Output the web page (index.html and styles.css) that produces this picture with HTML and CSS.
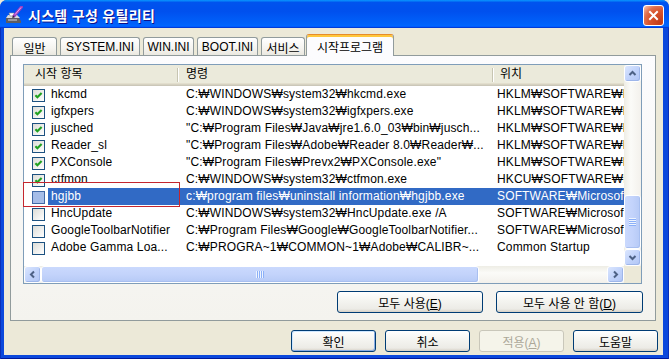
FILE: index.html
```html
<!DOCTYPE html>
<html lang="ko">
<head>
<meta charset="utf-8">
<title>시스템 구성 유틸리티</title>
<link rel="stylesheet" href="styles.css">
</head>
<body>
<div class="window">
  <div class="titlebar">
    <svg class="app-icon" viewBox="0 0 18 18" width="18" height="18">
      <polygon points="1,12 14,12 16,15 16,17 1,17" fill="#5d5d62"/>
      <polygon points="3,9 12,9 15,12 1,12" fill="#d9d9de"/>
      <rect x="3" y="13" width="9" height="2" fill="#9a9aa2"/>
      <polygon points="4,7 9,7 10,10 5,10" fill="#ffffff" stroke="#8a8a90" stroke-width="0.6"/>
      <line x1="16.5" y1="1" x2="9" y2="10" stroke="#9b3fc0" stroke-width="3" stroke-linecap="round"/>
      <line x1="16" y1="1.5" x2="10" y2="8.6" stroke="#e7a8f5" stroke-width="1"/>
      <polygon points="8,9.5 9.8,11 7.2,12.2" fill="#2a2a2a"/>
    </svg>
    <span class="title">시스템 구성 유틸리티</span>
    <div class="close">
      <svg viewBox="0 0 13 13" width="13" height="13"><path d="M3 3 L10 10 M10 3 L3 10" stroke="#fff" stroke-width="2" stroke-linecap="square" fill="none"/></svg>
    </div>
  </div>
  <div class="frame">
    <div class="client">
      <div class="tabs">
        <div class="tab w-general">일반</div>
        <div class="tab w-system">SYSTEM.INI</div>
        <div class="tab w-win">WIN.INI</div>
        <div class="tab w-boot">BOOT.INI</div>
        <div class="tab w-service">서비스</div>
        <div class="tab tab-active w-startup">시작프로그램</div>
      </div>
      <div class="panel">
        <div class="listview">
          <div class="lv-body">
            <div class="lv-header">
              <div class="hcell h1">시작 항목</div>
              <div class="hcell h2">명령</div>
              <div class="hcell h3">위치</div>
            </div>
            <div class="lv-row">
              <div class="c-check"><span class="chk"><svg viewBox="0 0 11 11" width="11" height="11"><path d="M2.4 5.2 L4.4 7.3 L8.6 2.9" stroke="#21a121" stroke-width="2.1" fill="none"/></svg></span></div>
              <div class="cell c-name">hkcmd</div>
              <div class="cell c-cmd">C:₩WINDOWS₩system32₩hkcmd.exe</div>
              <div class="cell c-loc">HKLM₩SOFTWARE₩Micro</div>
            </div>
            <div class="lv-row">
              <div class="c-check"><span class="chk"><svg viewBox="0 0 11 11" width="11" height="11"><path d="M2.4 5.2 L4.4 7.3 L8.6 2.9" stroke="#21a121" stroke-width="2.1" fill="none"/></svg></span></div>
              <div class="cell c-name">igfxpers</div>
              <div class="cell c-cmd">C:₩WINDOWS₩system32₩igfxpers.exe</div>
              <div class="cell c-loc">HKLM₩SOFTWARE₩Micro</div>
            </div>
            <div class="lv-row">
              <div class="c-check"><span class="chk"><svg viewBox="0 0 11 11" width="11" height="11"><path d="M2.4 5.2 L4.4 7.3 L8.6 2.9" stroke="#21a121" stroke-width="2.1" fill="none"/></svg></span></div>
              <div class="cell c-name">jusched</div>
              <div class="cell c-cmd">"C:₩Program Files₩Java₩jre1.6.0_03₩bin₩jusch...</div>
              <div class="cell c-loc">HKLM₩SOFTWARE₩Micro</div>
            </div>
            <div class="lv-row">
              <div class="c-check"><span class="chk"><svg viewBox="0 0 11 11" width="11" height="11"><path d="M2.4 5.2 L4.4 7.3 L8.6 2.9" stroke="#21a121" stroke-width="2.1" fill="none"/></svg></span></div>
              <div class="cell c-name">Reader_sl</div>
              <div class="cell c-cmd">"C:₩Program Files₩Adobe₩Reader 8.0₩Reader₩...</div>
              <div class="cell c-loc">HKLM₩SOFTWARE₩Micro</div>
            </div>
            <div class="lv-row">
              <div class="c-check"><span class="chk"><svg viewBox="0 0 11 11" width="11" height="11"><path d="M2.4 5.2 L4.4 7.3 L8.6 2.9" stroke="#21a121" stroke-width="2.1" fill="none"/></svg></span></div>
              <div class="cell c-name">PXConsole</div>
              <div class="cell c-cmd">"C:₩Program Files₩Prevx2₩PXConsole.exe"</div>
              <div class="cell c-loc">HKLM₩SOFTWARE₩Micro</div>
            </div>
            <div class="lv-row">
              <div class="c-check"><span class="chk"><svg viewBox="0 0 11 11" width="11" height="11"><path d="M2.4 5.2 L4.4 7.3 L8.6 2.9" stroke="#21a121" stroke-width="2.1" fill="none"/></svg></span></div>
              <div class="cell c-name">ctfmon</div>
              <div class="cell c-cmd">C:₩WINDOWS₩system32₩ctfmon.exe</div>
              <div class="cell c-loc">HKCU₩SOFTWARE₩Micro</div>
            </div>
            <div class="lv-row selected">
              <div class="c-check"><span class="chk chk-sel"></span></div>
              <div class="cell c-name">hgjbb</div>
              <div class="cell c-cmd">c:₩program files₩uninstall information₩hgjbb.exe</div>
              <div class="cell c-loc">SOFTWARE₩Microsoft</div>
            </div>
            <div class="lv-row">
              <div class="c-check"><span class="chk"></span></div>
              <div class="cell c-name">HncUpdate</div>
              <div class="cell c-cmd">C:₩WINDOWS₩system32₩HncUpdate.exe /A</div>
              <div class="cell c-loc">SOFTWARE₩Microsoft</div>
            </div>
            <div class="lv-row">
              <div class="c-check"><span class="chk"></span></div>
              <div class="cell c-name">GoogleToolbarNotifier</div>
              <div class="cell c-cmd">C:₩Program Files₩Google₩GoogleToolbarNotifier...</div>
              <div class="cell c-loc">SOFTWARE₩Microsoft</div>
            </div>
            <div class="lv-row">
              <div class="c-check"><span class="chk"></span></div>
              <div class="cell c-name">Adobe Gamma Loa...</div>
              <div class="cell c-cmd">C:₩PROGRA~1₩COMMON~1₩Adobe₩CALIBR~...</div>
              <div class="cell c-loc">Common Startup</div>
            </div>
          </div>
          <div class="vscroll">
            <div class="sb-btn"><svg viewBox="0 0 9 9" width="9" height="9"><path d="M1.5 6 L4.5 3 L7.5 6" stroke="#4d6185" stroke-width="2" fill="none"/></svg></div>
            <div class="track"></div>
            <div class="vthumb"><span class="vgrip"></span></div>
            <div class="sb-btn"><svg viewBox="0 0 9 9" width="9" height="9"><path d="M1.5 3 L4.5 6 L7.5 3" stroke="#4d6185" stroke-width="2" fill="none"/></svg></div>
          </div>
          <div class="hscroll">
            <div class="sb-btn"><svg viewBox="0 0 9 9" width="9" height="9"><path d="M6 1.5 L3 4.5 L6 7.5" stroke="#4d6185" stroke-width="2" fill="none"/></svg></div>
            <div class="hthumb"><span class="hgrip"></span></div>
            <div class="track"></div>
            <div class="sb-btn"><svg viewBox="0 0 9 9" width="9" height="9"><path d="M3 1.5 L6 4.5 L3 7.5" stroke="#4d6185" stroke-width="2" fill="none"/></svg></div>
          </div>
          <div class="corner"></div>
          <div class="mark-box"></div>
        </div>
        <div class="panel-buttons">
          <button class="btn btn-enable">모두 사용(<u>E</u>)</button>
          <button class="btn btn-disable">모두 사용 안 함(<u>D</u>)</button>
        </div>
      </div>
      <div class="dialog-buttons">
        <button class="btn btn-dlg btn-default">확인</button>
        <button class="btn btn-dlg">취소</button>
        <button class="btn btn-dlg btn-disabled">적용(<u>A</u>)</button>
        <button class="btn btn-dlg">도움말</button>
      </div>
    </div>
  </div>
</div>
</body>
</html>
```

FILE: styles.css
```css
* { box-sizing: border-box; }

html, body {
  margin: 0;
  padding: 0;
  width: 669px;
  height: 359px;
  overflow: hidden;
  background: #ece9d8;
}

body {
  font-family: "Liberation Sans", "Noto Sans CJK KR", sans-serif;
  font-size: 12px;
  color: #000;
}

.window {
  width: 669px;
  height: 359px;
  display: flex;
  flex-direction: column;
  background: #0b46dc;
  border-radius: 7px 7px 0 0;
  overflow: hidden;
}

/* ---------- title bar ---------- */
.titlebar {
  flex: none;
  height: 28px;
  display: flex;
  align-items: center;
  padding: 0 5px;
  background: linear-gradient(#0997ff 0%, #0053ee 9%, #0050ee 40%, #0062fb 86%, #0066ff 92%, #005bff 95%, #003dd7 97%, #003dd7 100%);
}

.app-icon {
  flex: none;
  margin-top: 1px;
}

.title {
  flex: 1;
  margin-left: 5px;
  padding-top: 1px;
  color: #fff;
  font-family: "Noto Sans CJK KR", sans-serif;
  font-weight: bold;
  font-size: 14px;
  letter-spacing: 0.3px;
  text-shadow: 1px 1px #0f1089;
  white-space: nowrap;
}

.close {
  flex: none;
  align-self: flex-start;
  margin-top: 5px;
  width: 21px;
  height: 21px;
  border: 1px solid #fff;
  border-radius: 3px;
  background: radial-gradient(circle at 85% 85%, #c13b18 0%, #d9552e 50%, #e0704e 70%, #f1b09a 92%, #fff 100%);
  display: flex;
  align-items: center;
  justify-content: center;
}

/* ---------- frame / client ---------- */
.frame {
  flex: 1;
  display: flex;
  padding: 0 6px 4px 4px;
  background: #0b48dc;
  box-shadow: inset 1px 0 #0a2fb8, inset -1px 0 #0a2fb8, inset 0 -1px #00189a;
}

.client {
  flex: 1;
  background: #ece9d8;
  display: flex;
  flex-direction: column;
  padding: 6px 0 0 6px;
}

/* ---------- tabs ---------- */
.tabs {
  position: relative;
  z-index: 2;
  height: 21px;
  display: flex;
  align-items: flex-end;
  gap: 3px;
  padding-left: 2px;
}

.tab {
  flex: none;
  height: 18px;
  border: 1px solid #919b9c;
  border-bottom: none;
  border-radius: 3px 3px 0 0;
  background: linear-gradient(#ffffff, #f5f4f0 60%, #eae8e0);
  display: flex;
  align-items: center;
  justify-content: center;
  padding-top: 1px;
  white-space: nowrap;
}

.w-general { width: 45px; }
.w-system { width: 80px; }
.w-win { width: 51px; }
.w-boot { width: 61px; }
.w-service { width: 44px; }
.w-startup { width: 88px; }

.tab-active {
  height: 22px;
  margin-left: -2px;
  margin-bottom: -1px;
  align-items: flex-start;
  padding-top: 3px;
  border-top: 1px solid #e68b2c;
  background: #fcfcfe;
  box-shadow: inset 0 2px #ffc73c;
}

/* ---------- panel ---------- */
.panel {
  width: 646px;
  height: 266px;
  border: 1px solid #919b9c;
  background: linear-gradient(#fcfcfe, #f4f3ee);
  padding: 8px 12px 7px 12px;
  display: flex;
  flex-direction: column;
  gap: 7px;
}

/* ---------- list view ---------- */
.listview {
  position: relative;
  width: 619px;
  height: 220px;
  border: 1px solid #7f9db9;
  background: #fff;
  display: grid;
  grid-template-columns: 600px 17px;
  grid-template-rows: 201px 17px;
}

.lv-body {
  overflow: hidden;
}

.lv-header {
  display: grid;
  grid-template-columns: 153px 315px 132px;
  height: 21px;
  background: linear-gradient(#ebeadb 0, #ebeadb 18px, #e2decd 18px, #e2decd 19px, #d6d2c2 19px, #d6d2c2 20px, #cbc7b8 20px);
}

.hcell {
  line-height: 19px;
  white-space: nowrap;
  overflow: hidden;
}

.h1 { padding-left: 11px; }
.h2 { padding-left: 9px; }
.h3 { padding-left: 8px; }

.h2, .h3 {
  background:
    linear-gradient(#c7c5b2, #c7c5b2) 0 3px / 1px 14px no-repeat,
    linear-gradient(#ffffff, #ffffff) 1px 3px / 1px 14px no-repeat;
}

.lv-row {
  display: grid;
  grid-template-columns: 24px 132px 311px 133px;
  height: 17px;
  line-height: 17px;
  white-space: nowrap;
  letter-spacing: 0.15px;
}

.cell {
  overflow: hidden;
}

.c-check {
  padding: 3px 0 0 8px;
}

.c-name { padding-left: 3px; }
.c-cmd { padding-left: 6px; }
.c-loc { padding-left: 6px; }

.selected .c-name,
.selected .c-cmd,
.selected .c-loc {
  background: #316ac5;
  color: #fff;
}

.chk {
  display: flex;
  align-items: center;
  justify-content: center;
  width: 13px;
  height: 13px;
  border: 1px solid #1c5180;
  background: linear-gradient(135deg, #dcdcd7, #ffffff);
}

.chk-sel {
  border-color: #3f68a6;
  background: #a6bde8;
}

/* ---------- scrollbars ---------- */
.vscroll {
  display: flex;
  flex-direction: column;
  background: linear-gradient(to right, #eeede5, #fbfbf8 40%, #f3f1ec);
}

.hscroll {
  display: flex;
  background: linear-gradient(#eeede5, #fbfbf8 40%, #f3f1ec);
}

.track {
  flex: 1;
}

.sb-btn {
  flex: none;
  width: 17px;
  height: 17px;
  border: 1px solid #fff;
  border-radius: 3px;
  background: linear-gradient(135deg, #dbe6fe, #c1d3fb 50%, #b2c6f5);
  box-shadow: inset -1px -1px #9eb6ea;
  display: flex;
  align-items: center;
  justify-content: center;
}

.vthumb {
  flex: none;
  height: 54px;
  border: 1px solid #fff;
  border-radius: 3px;
  background: linear-gradient(to right, #cad9fd, #c3d3fb 50%, #b6caf6);
  box-shadow: inset -1px -1px #a8bff0;
  display: flex;
  align-items: center;
  justify-content: center;
}

.vgrip {
  width: 7px;
  height: 8px;
  background: repeating-linear-gradient(#eef4fe 0, #eef4fe 1px, #8cb0f8 1px, #8cb0f8 2px);
}

.hthumb {
  flex: none;
  width: 438px;
  height: 17px;
  border: 1px solid #fff;
  border-radius: 3px;
  background: linear-gradient(#cad9fd, #c3d3fb 50%, #b6caf6);
  box-shadow: inset -1px -1px #a8bff0;
  display: flex;
  align-items: center;
  justify-content: center;
}

.hgrip {
  width: 8px;
  height: 7px;
  background: repeating-linear-gradient(to right, #eef4fe 0, #eef4fe 1px, #8cb0f8 1px, #8cb0f8 2px);
}

.corner {
  background: #ece9d8;
}

.mark-box {
  position: absolute;
  left: -1px;
  top: 117px;
  width: 157px;
  height: 25px;
  border: 1px solid #c4262e;
  pointer-events: none;
}

/* ---------- buttons ---------- */
.panel-buttons {
  display: flex;
  justify-content: flex-end;
  gap: 13px;
}

.btn {
  height: 22px;
  padding: 0;
  border: 1px solid #003c74;
  border-radius: 3px;
  background: linear-gradient(#ffffff, #f4f4f0 45%, #ecebe6 85%, #d6d0c5);
  font-family: "Liberation Sans", "Noto Sans CJK KR", sans-serif;
  font-size: 12px;
  color: #000;
}

.btn u {
  text-underline-offset: 1px;
}

.btn-enable { width: 146px; }
.btn-disable { width: 147px; }

.dialog-buttons {
  display: flex;
  justify-content: flex-end;
  gap: 9px;
  margin-top: 9px;
  padding-right: 5px;
}

.btn-dlg {
  width: 85px;
}

.btn-default {
  box-shadow: inset -1px -1px #89ade4, inset 1px 1px #cee7ff;
}

.btn-disabled {
  border-color: #c9c7ba;
  background: #f5f4ea;
  color: #aca899;
}
```
